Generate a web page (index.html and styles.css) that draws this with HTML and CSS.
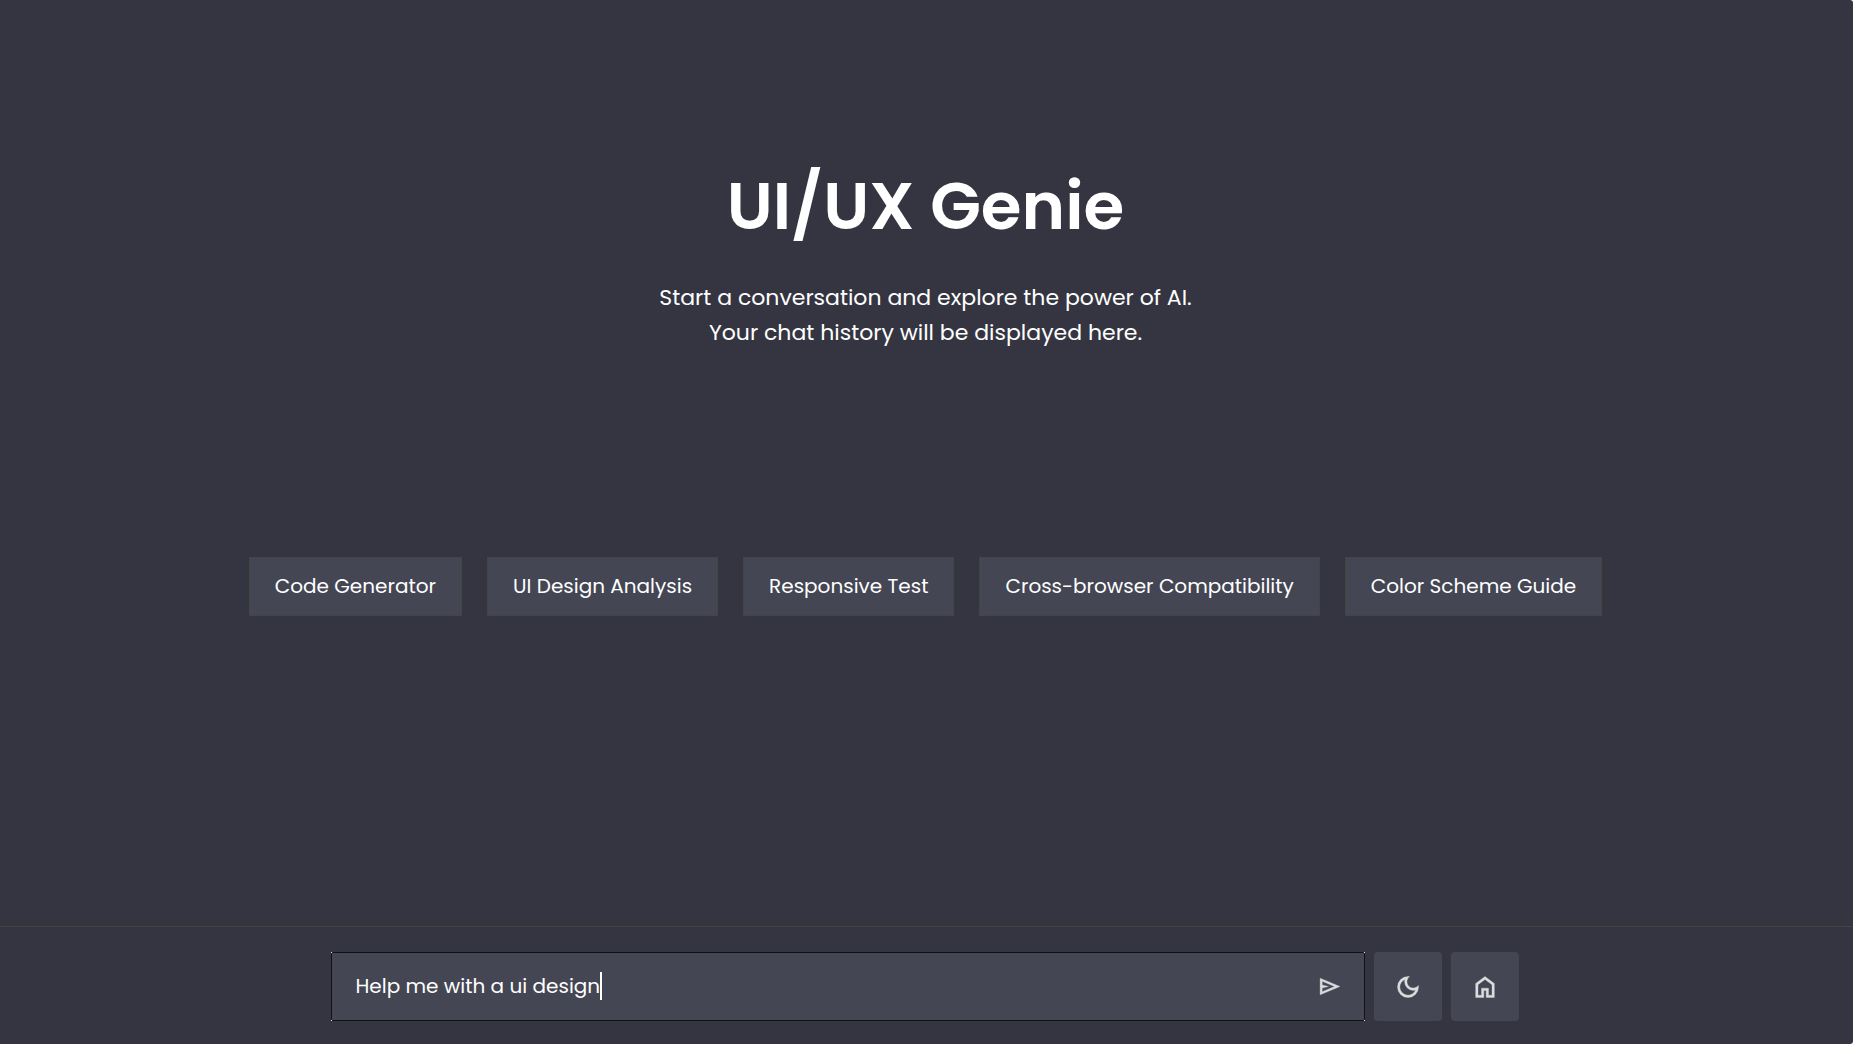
FILE: index.html
```html
<!DOCTYPE html>
<html lang="en">
<head>
  <meta charset="utf-8">
  <meta name="viewport" content="width=device-width, initial-scale=1">
  <title>UI/UX Genie</title>
  <link rel="stylesheet" href="styles.css">
</head>
<body>
  <main class="chat">
    <header class="intro">
      <h1 class="title">UI/UX Genie</h1>
      <p class="subtitle">Start a conversation and explore the power of AI.<br>Your chat history will be displayed here.</p>
    </header>
    <nav class="prompts" aria-label="Suggested prompts">
      <button class="prompt" type="button">Code Generator</button>
      <button class="prompt" type="button">UI Design Analysis</button>
      <button class="prompt" type="button">Responsive Test</button>
      <button class="prompt" type="button">Cross-browser Compatibility</button>
      <button class="prompt" type="button">Color Scheme Guide</button>
    </nav>
  </main>
  <footer class="composer">
    <form class="composer-row">
      <div class="field">
        <input class="message" type="text" aria-label="Message" value="Help me with a ui design">
        <span class="caret"></span>
        <button class="send" type="submit" aria-label="Send">
          <svg class="icon-send" viewBox="0 0 24 24"><path d="M3 20V4l19 8-19 8Zm2-3 11.85-5L5 7v3.5l6 1.5-6 1.5V17Z"/></svg>
        </button>
      </div>
      <button class="tool" type="button" aria-label="Dark mode">
        <svg class="icon" viewBox="0 0 24 24"><path d="M12 21q-3.75 0-6.375-2.625T3 12t2.625-6.375T12 3q.35 0 .688.025.337.025.662.075-1.025.725-1.637 1.887Q11.1 6.15 11.1 7.5q0 2.25 1.575 3.825Q14.25 12.9 16.5 12.9q1.375 0 2.525-.613 1.15-.612 1.875-1.637.05.325.075.662Q21 11.65 21 12q0 3.75-2.625 6.375T12 21Zm0-2q2.2 0 3.95-1.212 1.75-1.213 2.55-3.163-.5.125-1 .2-.5.075-1 .075-3.075 0-5.238-2.162Q9.1 10.575 9.1 7.5q0-.5.075-1t.2-1q-1.95.8-3.162 2.55Q5 9.8 5 12q0 2.9 2.05 4.95Q9.1 19 12 19Z"/></svg>
      </button>
      <button class="tool" type="button" aria-label="Home">
        <svg class="icon" viewBox="0 0 24 24"><path d="M6 19h3v-6h6v6h3v-9l-6-4.5L6 10v9Zm-2 2V9l8-6 8 6v12h-7v-6h-2v6H4Z"/></svg>
      </button>
    </form>
  </footer>
</body>
</html>
```
FILE: styles.css
```css
* {
  box-sizing: border-box;
}

html {
  background: #fff;
}

body {
  display: flex;
  flex-direction: column;
  min-height: 100vh;
  margin: 0;
  border-radius: 0 3px 3px 0;
  background: #343541;
  color: #fff;
  font-family: Poppins, Inter, sans-serif;
}

button,
input {
  margin: 0;
  color: inherit;
  font: inherit;
}

button {
  padding: 0;
  border: 0;
  cursor: pointer;
}

.chat {
  display: flex;
  flex: 1;
  flex-direction: column;
  align-items: center;
  gap: 207px;
  padding: 156px 26px 24px 24px;
}

.intro {
  display: flex;
  flex-direction: column;
  gap: 24px;
  text-align: center;
}

.title {
  margin: 0;
  font-size: 66px;
  font-weight: 600;
  line-height: 100px;
}

.subtitle {
  margin: 0;
  font-size: 22px;
  line-height: 35px;
}

.prompts {
  display: flex;
  flex-wrap: wrap;
  justify-content: center;
  gap: 25px;
}

.prompt {
  padding: 13px 25px 14px;
  border: 1px solid #444;
  background: #444654;
  font-size: 20px;
  line-height: 30px;
  white-space: nowrap;
}

.composer {
  padding: 25px 28px 23px 24px;
  border-top: 1px solid #444;
}

.composer-row {
  display: flex;
  gap: 9px;
  max-width: 1188px;
  margin: 0 auto;
}

.field {
  position: relative;
  flex: 1;
  background: #fff;
}

.message {
  display: block;
  width: 100%;
  height: 69px;
  padding: 0 72px 2px 24px;
  border: 1px solid #111;
  border-radius: 2px;
  outline: 0;
  background: #444654;
  font-size: 20px;
}

.caret {
  position: absolute;
  top: 20px;
  left: 269px;
  width: 2px;
  height: 28px;
  background: #fff;
}

.send {
  position: absolute;
  top: 0;
  right: 0;
  display: grid;
  place-items: center;
  width: 70px;
  height: 69px;
  background: none;
}

.tool {
  display: grid;
  place-items: center;
  width: 68px;
  height: 69px;
  border-radius: 4px;
  background: #444654;
}

.icon,
.icon-send {
  width: 28px;
  height: 28px;
  fill: #dcdcdc;
  stroke: #dcdcdc;
  stroke-width: 0.3;
}

.icon-send {
  width: 25px;
  height: 25px;
}
```
